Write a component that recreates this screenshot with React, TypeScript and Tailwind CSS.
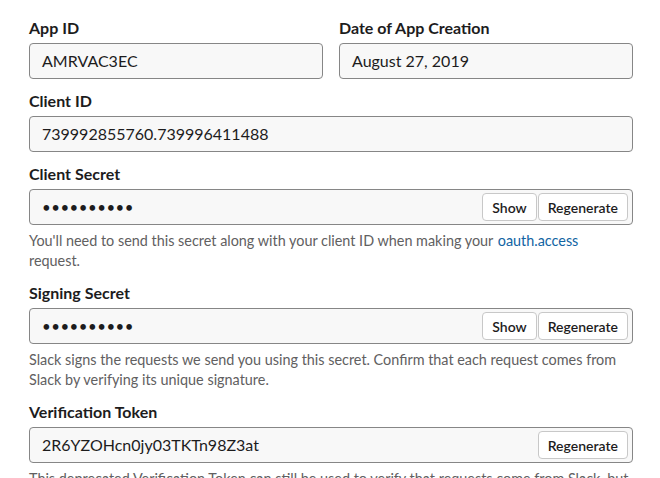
import React from "react";

const font = { fontFamily: "Lato, 'Noto Sans', sans-serif" };

function Label({ children }: { children: React.ReactNode }) {
  return <div className="text-[16px] font-bold leading-[22px] mb-1 text-[#1d1c1d]">{children}</div>;
}

function Box({ value, buttons = [] as string[], dots = false }: { value: string; buttons?: string[]; dots?: boolean }) {
  return (
    <div className="h-[36px] flex items-center bg-[#f8f8f8] border border-[#868686] rounded-[4px] pl-3 pr-[4px]">
      <div className={dots ? "flex-1 text-[15px] tracking-[0.5px] text-[#1d1c1d]" : "flex-1 text-[16px] text-[#1d1c1d]"}>{value}</div>
      <div className="flex gap-px">
        {buttons.map((b) => (
          <div
            key={b}
            className="h-[28px] px-[9px] flex items-center bg-white border border-[#c8c8c8] rounded-[4px] text-[14px] font-bold text-[#1d1c1d]"
            style={{ fontWeight: 600 }}
          >
            {b}
          </div>
        ))}
      </div>
    </div>
  );
}

function Help({ children }: { children: React.ReactNode }) {
  return <div className="mt-[6px] text-[14.4px] leading-[20px] text-[#616061]">{children}</div>;
}

export default function App() {
  return (
    <div className="w-[660px] h-[478px] overflow-hidden bg-white" style={font}>
      <div className="w-[604px] ml-[29px] pt-[17px] flex flex-col gap-[11px]">
        <div className="grid grid-cols-2 gap-4">
          <div>
            <Label>App ID</Label>
            <Box value="AMRVAC3EC" />
          </div>
          <div>
            <Label>Date of App Creation</Label>
            <Box value="August 27, 2019" />
          </div>
        </div>
        <div>
          <Label>Client ID</Label>
          <Box value="739992855760.739996411488" />
        </div>
        <div>
          <Label>Client Secret</Label>
          <Box value="••••••••••" dots buttons={["Show", "Regenerate"]} />
          <Help>
            You'll need to send this secret along with your client ID when making your{" "}
            <span className="text-[#1264a3] ml-[1px]">oauth.access</span> request.
          </Help>
        </div>
        <div>
          <Label>Signing Secret</Label>
          <Box value="••••••••••" dots buttons={["Show", "Regenerate"]} />
          <Help>
            Slack signs the requests we send you using this secret. Confirm that each request comes from Slack by
            verifying its unique signature.
          </Help>
        </div>
        <div>
          <Label>Verification Token</Label>
          <Box value="2R6YZOHcn0jy03TKTn98Z3at" buttons={["Regenerate"]} />
          <Help>
            This deprecated Verification Token can still be used to verify that requests come from Slack, but we
            strongly recommend using the above, more secure, signing secret instead.
          </Help>
        </div>
      </div>
    </div>
  );
}
